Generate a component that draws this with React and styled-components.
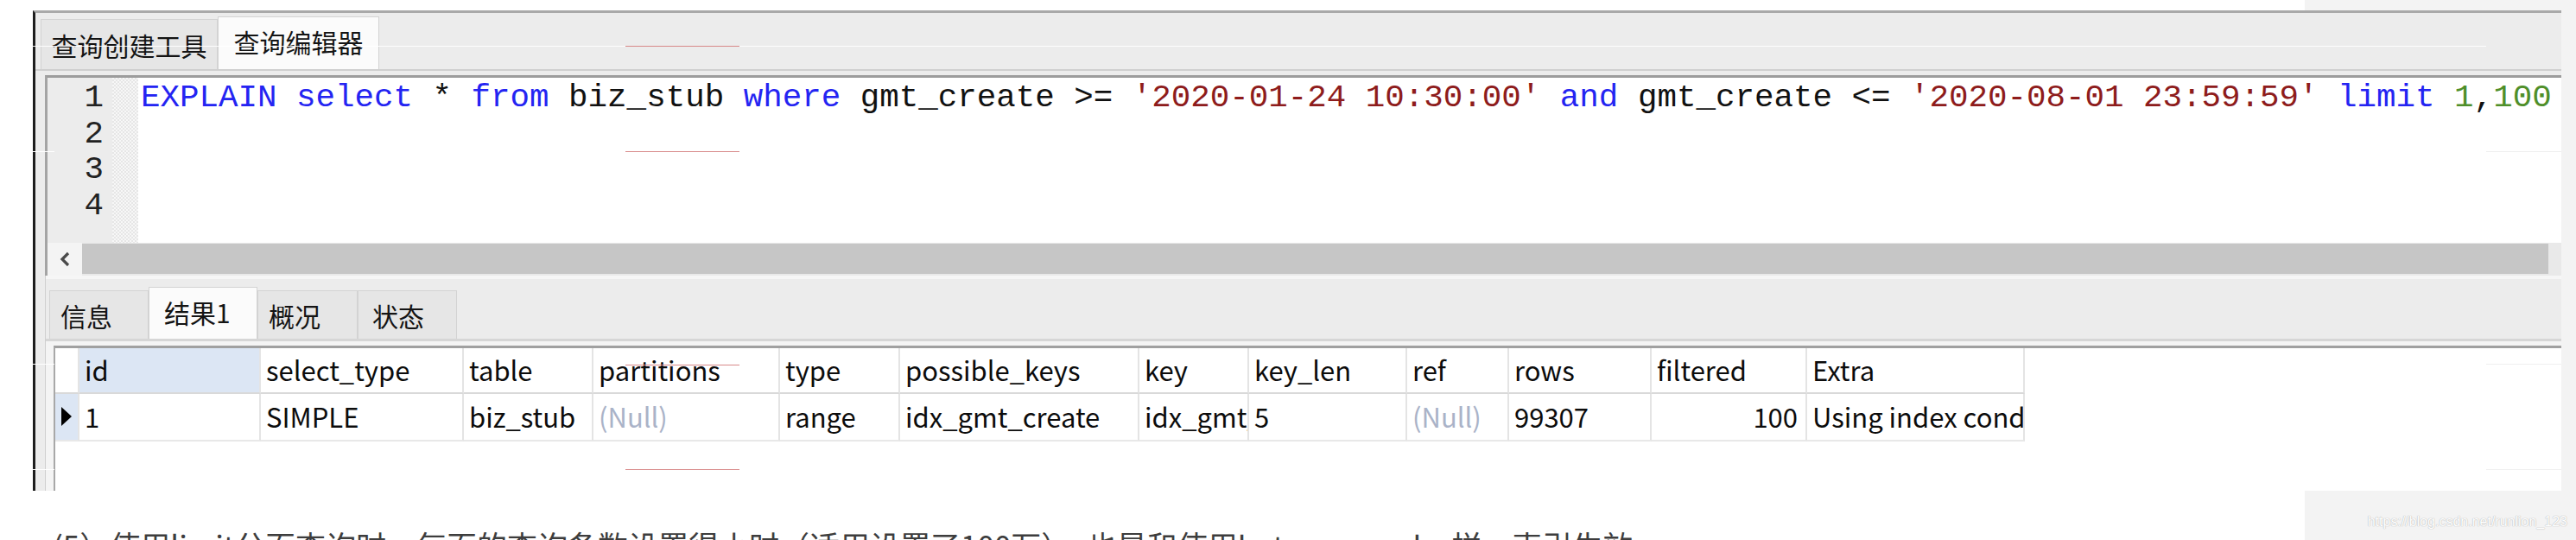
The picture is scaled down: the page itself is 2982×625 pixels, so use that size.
import React from 'react';
import styled, { createGlobalStyle } from 'styled-components';

const GlobalStyle = createGlobalStyle`
  html, body {
    margin: 0;
    padding: 0;
    background: #fff;
  }
  body {
    font-family: "Noto Sans CJK SC", "Noto Sans", sans-serif;
  }
`;

// page background: white article, grey sidebar on the right
const Page = styled.div`
  position: relative;
  width: 2982px;
  height: 625px;
  overflow: hidden;
  display: flex;
  flex-direction: column;
  background: linear-gradient(to right, #fff 2668px, #f3f3f3 2668px);
`;

const Shot = styled.div`
  margin: 12px 0 0 38px;
  width: 2927px;
  height: 556px;
  flex-shrink: 0;
  box-sizing: border-box;
  display: flex;
  flex-direction: column;
  background: #ececec;
  border-left: 3px solid #1e1e1e;
  border-top: 3px solid #a9a9a9;
  overflow: hidden;
`;

const TopTabs = styled.div`
  height: 67px;
  box-sizing: border-box;
  display: flex;
  align-items: flex-end;
  padding-left: 6px;
  border-bottom: 2px solid #cfcfcf;
`;

const Tab = styled.div`
  width: ${p => p.$w}px;
  height: ${p => p.$h}px;
  box-sizing: border-box;
  display: flex;
  align-items: center;
  justify-content: ${p => (p.$left ? 'flex-start' : 'center')};
  padding-left: ${p => p.$pad || 0}px;
  padding-bottom: ${p => (p.$active ? 4 : 0)}px;
  background: ${p => (p.$active ? '#fbfbfb' : '#e6e6e6')};
  border: 1px solid #d3d3d3;
  border-bottom: none;
  font-size: 30px;
  line-height: 1;
  color: #141414;
  white-space: nowrap;
`;

const Editor = styled.div`
  margin: 5px 0 0 11px;
  display: flex;
  flex-direction: column;
  border-top: 3px solid #9c9c9c;
  border-left: 3px solid #a4a4a4;
`;

const CodeArea = styled.div`
  height: 191px;
  display: flex;
  background: #fff;
`;

const Gutter = styled.div`
  width: 75px;
  padding: 3px 10px 0 0;
  box-sizing: border-box;
  background: #ececec;
  text-align: right;
  font-family: "Liberation Mono", monospace;
  font-size: 37.5px;
  line-height: 41.7px;
  color: #222;
`;

const Hatch = styled.div`
  width: 30px;
  background: repeating-conic-gradient(#e6e6e6 0 25%, #f7f7f7 0 50%) 0 0 / 4px 4px;
`;

const Code = styled.pre`
  flex: 1;
  margin: 0;
  padding: 3px 0 0 3px;
  font-family: "Liberation Mono", monospace;
  font-size: 37.5px;
  line-height: 41.7px;
  color: #111;
  white-space: pre;
  overflow: hidden;
`;

const Kw = styled.span`
  color: #2424f2;
`;

const Str = styled.span`
  color: #8e1c1c;
`;

const Num = styled.span`
  color: #4f8f2a;
`;

const Scrollbar = styled.div`
  height: 38px;
  display: flex;
  background: #e9e9e9;
`;

const ScrollButton = styled.div`
  width: 40px;
  display: flex;
  align-items: center;
  justify-content: center;
  background: #f4f4f4;
`;

const Thumb = styled.div`
  width: 2855px;
  margin: 1px 0 2px;
  background: #c6c6c6;
`;

const BottomPanel = styled.div`
  flex: 1;
  margin-left: 11px;
  display: flex;
  flex-direction: column;
  border-left: 1px solid #cfcfcf;
`;

const BottomTabs = styled.div`
  height: 76px;
  box-sizing: border-box;
  display: flex;
  align-items: flex-end;
  padding-left: 4px;
  border-top: 4px solid #f6f6f6;
  border-bottom: 3px solid #d6d6d6;
`;

const ResultArea = styled.div`
  flex: 1;
  padding: 5px 0 0 9px;
  background: #f4f4f4;
  display: flex;
`;

const GridBox = styled.div`
  flex: 1;
  background: #fff;
  border-top: 3px solid #a0a0a0;
  border-left: 2px solid #a8a8a8;
`;

const Grid = styled.div`
  display: grid;
  grid-template-columns: ${p => p.$cols};
  width: max-content;
  font-family: "Noto Sans CJK SC", "Noto Sans", sans-serif;
  font-size: 31px;
  color: #0c0c0c;
`;

const Cell = styled.div`
  height: ${p => (p.$head ? 53 : 55)}px;
  box-sizing: border-box;
  display: flex;
  align-items: center;
  justify-content: ${p => (p.$right ? 'flex-end' : 'flex-start')};
  padding: 0 ${p => (p.$right ? 9 : 4)}px 2px 6px;
  background: ${p => (p.$sel ? '#dce6f4' : '#fff')};
  color: ${p => (p.$null ? '#aab3c8' : 'inherit')};
  border-right: 2px solid #e4e4e4;
  border-bottom: 2px solid ${p => (p.$head ? '#d9d9d9' : '#e8e8e8')};
  white-space: nowrap;
  overflow: hidden;
`;

const Footer = styled.div`
  flex: 1;
  display: flex;
  overflow: hidden;
`;

const Paragraph = styled.p`
  margin: 0;
  padding: 42px 0 0 61px;
  font-size: 35px;
  line-height: 42px;
  color: #3d3d3d;
  white-space: nowrap;
`;

const Watermark = styled.div`
  margin: 27px 10px 0 auto;
  font-family: "Liberation Sans", sans-serif;
  font-size: 16px;
  color: #fff;
  text-shadow: 0 0 1px #b5b5b5, 0 0 1px #b5b5b5;
`;

// thin stray lines lying over the screenshot
const Mark = styled.div`
  position: absolute;
  left: ${p => p.$x}px;
  top: ${p => p.$y}px;
  width: ${p => p.$w}px;
  height: 1px;
  background: ${p => p.$c};
`;

const columns = [
  { name: '', w: 28 },
  { name: 'id', w: 210, sel: true },
  { name: 'select_type', w: 235 },
  { name: 'table', w: 150 },
  { name: 'partitions', w: 216 },
  { name: 'type', w: 139 },
  { name: 'possible_keys', w: 277 },
  { name: 'key', w: 127 },
  { name: 'key_len', w: 183 },
  { name: 'ref', w: 118 },
  { name: 'rows', w: 165 },
  { name: 'filtered', w: 180 },
  { name: 'Extra', w: 252 },
];

const row = [
  '1', 'SIMPLE', 'biz_stub', null, 'range', 'idx_gmt_create',
  'idx_gmt_create', '5', null, '99307', '100', 'Using index condition',
];

const marks = [
  { x: 38, y: 53, w: 2840, c: 'rgba(255,255,255,0.9)' },
  { x: 724, y: 53, w: 132, c: '#d88a8a' },
  { x: 724, y: 175, w: 132, c: '#d88a8a' },
  { x: 724, y: 422, w: 132, c: '#d88a8a' },
  { x: 724, y: 543, w: 132, c: '#d88a8a' },
  { x: 38, y: 175, w: 25, c: '#fff' },
  { x: 38, y: 421, w: 25, c: '#fff' },
  { x: 38, y: 543, w: 25, c: '#fff' },
  { x: 2878, y: 175, w: 87, c: '#efefef' },
  { x: 2878, y: 421, w: 87, c: '#efefef' },
  { x: 2878, y: 543, w: 87, c: '#efefef' },
];

function App() {
  return (
    <Page>
      <GlobalStyle />
      <Shot>
        <TopTabs>
          <Tab $w={205} $h={58}>查询创建工具</Tab>
          <Tab $w={187} $h={61} $active>查询编辑器</Tab>
        </TopTabs>

        <Editor>
          <CodeArea>
            <Gutter>
              <div>1</div>
              <div>2</div>
              <div>3</div>
              <div>4</div>
            </Gutter>
            <Hatch />
            <Code>
              <Kw>EXPLAIN</Kw> <Kw>select</Kw> * <Kw>from</Kw> biz_stub <Kw>where</Kw> gmt_create &gt;={' '}
              <Str>'2020-01-24 10:30:00'</Str> <Kw>and</Kw> gmt_create &lt;={' '}
              <Str>'2020-08-01 23:59:59'</Str> <Kw>limit</Kw> <Num>1</Num>,<Num>100</Num>
            </Code>
          </CodeArea>
          <Scrollbar>
            <ScrollButton>
              <svg width="14" height="20" viewBox="0 0 14 20">
                <polyline points="11,3 4,10 11,17" fill="none" stroke="#4a4a4a" strokeWidth="3.2" />
              </svg>
            </ScrollButton>
            <Thumb />
          </Scrollbar>
        </Editor>

        <BottomPanel>
          <BottomTabs>
            <Tab $w={115} $h={56} $left $pad={12}>信息</Tab>
            <Tab $w={126} $h={60} $left $pad={17} $active>结果1</Tab>
            <Tab $w={116} $h={56} $left $pad={12}>概况</Tab>
            <Tab $w={115} $h={56} $left $pad={16}>状态</Tab>
          </BottomTabs>
          <ResultArea>
            <GridBox>
              <Grid $cols={columns.map(c => `${c.w}px`).join(' ')}>
                {columns.map((c, i) => (
                  <Cell key={`h${i}`} $head $sel={c.sel}>{c.name}</Cell>
                ))}
                <Cell $sel>
                  <svg width="14" height="24" viewBox="0 0 14 24">
                    <polygon points="1,1 13,12 1,23" fill="#000" />
                  </svg>
                </Cell>
                {row.map((v, i) => (
                  <Cell key={`d${i}`} $null={v === null} $right={i === 10}>
                    {v === null ? '(Null)' : v}
                  </Cell>
                ))}
              </Grid>
            </GridBox>
          </ResultArea>
        </BottomPanel>
      </Shot>

      <Footer>
        <Paragraph>
          (5）使用limit分页查询时，每页的查询条数设置得小时（适用设置了100万），也是和使用between and一样，索引生效
        </Paragraph>
        <Watermark>https://blog.csdn.net/runlion_123</Watermark>
      </Footer>

      {marks.map((m, i) => (
        <Mark key={i} $x={m.x} $y={m.y} $w={m.w} $c={m.c} />
      ))}
    </Page>
  );
}

export default App;
